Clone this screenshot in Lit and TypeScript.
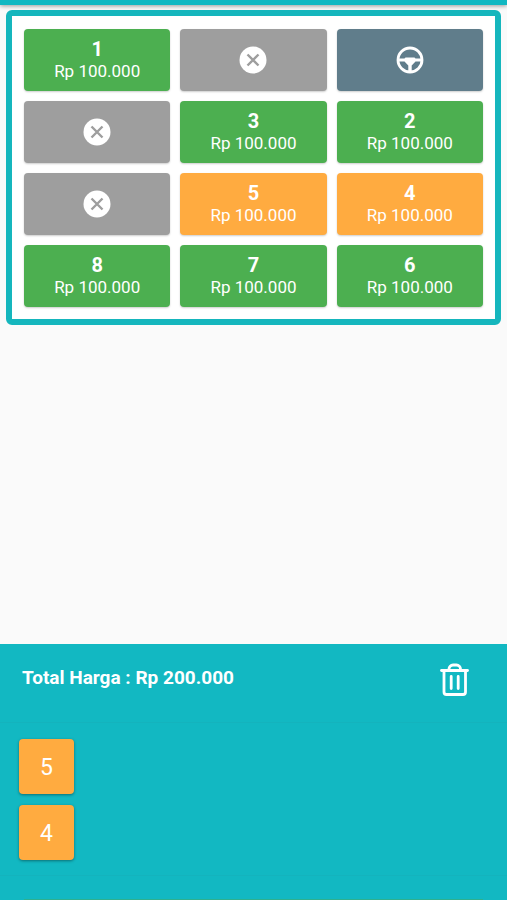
import { LitElement, html, css, nothing } from "lit";
import { customElement, property, state } from "lit/decorators.js";

type Kind = "free" | "picked" | "blocked" | "driver";

interface Seat {
  kind: Kind;
  label?: string;
}

const PRICE = 100000;

const rupiah = (n: number) =>
  "Rp " + String(n).replace(/\B(?=(\d{3})+(?!\d))/g, ".");

@customElement("seat-button")
class SeatButton extends LitElement {
  @property() kind: Kind = "free";
  @property() label = "";

  static styles = css`
    :host {
      display: block;
    }
    .seat {
      display: flex;
      flex-direction: column;
      align-items: center;
      justify-content: center;
      box-sizing: border-box;
      width: 100%;
      height: 62px;
      margin: 0;
      padding: 0 0 1px;
      border: 0;
      border-radius: 4px;
      color: #fff;
      font: 400 17px/22px Roboto, "Noto Sans", sans-serif;
      box-shadow: 0 1px 2px rgba(0, 0, 0, 0.2);
      cursor: pointer;
    }
    .free {
      background: #4caf50;
    }
    .picked {
      background: #ffab40;
    }
    .blocked {
      background: #9e9e9e;
      cursor: default;
    }
    .driver {
      background: #607d8b;
      cursor: default;
    }
    .number {
      font-size: 20px;
      font-weight: 700;
    }
    .icon {
      width: 28px;
      height: 28px;
      fill: currentColor;
    }
    .cross {
      fill: none;
      stroke: #9e9e9e;
      stroke-width: 2.4;
    }
    .ring {
      fill: none;
      stroke: currentColor;
      stroke-width: 2.8;
    }
  `;

  render() {
    if (this.kind === "blocked") {
      return html`<button class="seat blocked" disabled aria-label="Tidak tersedia">
        <svg class="icon" viewBox="0 0 28 28">
          <circle cx="14" cy="14" r="13.5" />
          <path class="cross" d="M8.500 8.500l11 11M19.500 8.500l-11 11" />
        </svg>
      </button>`;
    }
    if (this.kind === "driver") {
      return html`<button class="seat driver" disabled aria-label="Sopir">
        <svg class="icon" viewBox="0 0 28 28">
          <circle class="ring" cx="14" cy="14" r="12" />
          <path
            d="M2 12.600h6.500l1-1h9l1 1H26v2.800h-6.500l-3.800 4V26h-3.400v-6.600l-3.800-4H2z"
          />
        </svg>
      </button>`;
    }
    return html`<button class="seat ${this.kind}">
      <span class="number">${this.label}</span>
      <span>${rupiah(PRICE)}</span>
    </button>`;
  }
}

@customElement("app-root")
class AppRoot extends LitElement {
  @state() private seats: Seat[] = [
    { kind: "free", label: "1" },
    { kind: "blocked" },
    { kind: "driver" },
    { kind: "blocked" },
    { kind: "free", label: "3" },
    { kind: "free", label: "2" },
    { kind: "blocked" },
    { kind: "picked", label: "5" },
    { kind: "picked", label: "4" },
    { kind: "free", label: "8" },
    { kind: "free", label: "7" },
    { kind: "free", label: "6" },
  ];

  static styles = css`
    :host {
      display: flex;
      flex-direction: column;
      min-height: 100vh;
      background: #fafafa;
      font-family: Roboto, "Noto Sans", sans-serif;
      color: #fff;
    }
    .bar {
      height: 5px;
      background: #12b8c2;
      box-shadow: 0 1px 4px rgba(0, 0, 0, 0.4);
    }
    .plan {
      display: grid;
      grid-template-columns: repeat(3, 1fr);
      gap: 10px;
      margin: 5px 6px 0;
      padding: 13px 12px 12px;
      border: 6px solid #15b6bd;
      border-radius: 6px;
      background: #fff;
    }
    .panel {
      margin-top: auto;
      background: #12b8c2;
    }
    .head {
      display: flex;
      align-items: center;
      justify-content: space-between;
      box-sizing: border-box;
      height: 79px;
      padding: 0 34px 10px 22px;
      border-bottom: 1px solid #14b3bd;
    }
    .total {
      margin: 0;
      font-size: 19px;
      line-height: 24px;
      font-weight: 700;
    }
    .clear {
      display: flex;
      margin: 0;
      padding: 0;
      border: 0;
      background: none;
      color: inherit;
      cursor: pointer;
    }
    .trash {
      width: 38px;
      height: 38px;
      fill: none;
      stroke: currentColor;
      stroke-width: 2.8;
      stroke-linecap: round;
      stroke-linejoin: round;
    }
    .chosen {
      display: flex;
      flex-direction: column;
      gap: 11px;
      margin: 0;
      padding: 16px 19px 15px;
      border-bottom: 1px solid #14b3bd;
      list-style: none;
    }
    .chip {
      display: block;
      width: 55px;
      height: 55px;
      margin: 0;
      padding: 2px 0 0;
      border: 0;
      border-radius: 4px;
      background: #ffab40;
      color: #fff;
      font: 400 23px/28px Roboto, "Noto Sans", sans-serif;
      box-shadow: 0 1px 3px rgba(0, 0, 0, 0.4);
      cursor: pointer;
    }
    .foot {
      height: 23px;
      margin: 0 24px;
      border-bottom: 1px solid #2eb08e;
    }
  `;

  render() {
    const picked = this.seats.filter((s) => s.kind === "picked");
    return html`
      <header class="bar"></header>
      <main class="plan">
        ${this.seats.map(
          (s) => html`<seat-button .kind=${s.kind} .label=${s.label ?? ""}></seat-button>`
        )}
      </main>
      <section class="panel">
        <div class="head">
          <p class="total">Total Harga : ${rupiah(picked.length * PRICE)}</p>
          <button class="clear" aria-label="Hapus pilihan">
            <svg class="trash" viewBox="0 0 38 38">
              <path d="M9 11.500V33a2.500 2.500 0 0 0 2.500 2.500h16.500a2.500 2.500 0 0 0 2.500-2.500V11.500" />
              <path d="M6.500 11.500h26" />
              <path d="M14 11v-1a4 4 0 0 1 4-4h3.500a4 4 0 0 1 4 4v1" />
              <path d="M16.200 17.500v12M23.200 17.500v12" />
            </svg>
          </button>
        </div>
        ${picked.length
          ? html`<ul class="chosen">
              ${picked.map((s) => html`<li><button class="chip">${s.label}</button></li>`)}
            </ul>`
          : nothing}
        <footer class="foot"></footer>
      </section>
    `;
  }
}
